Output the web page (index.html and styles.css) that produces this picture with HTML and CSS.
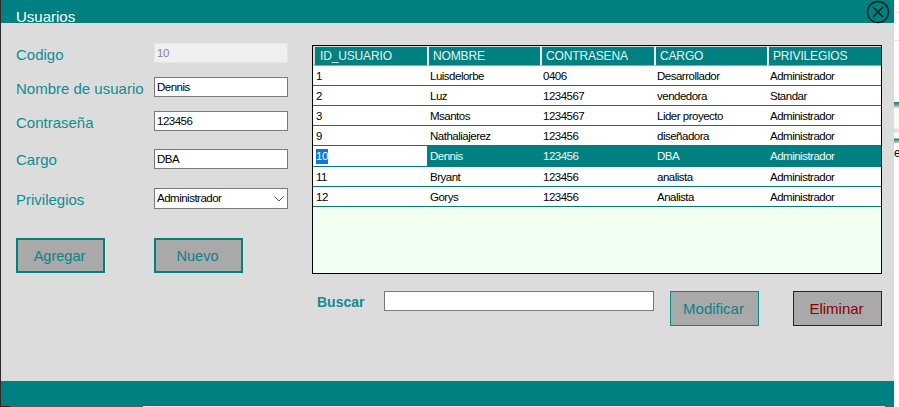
FILE: index.html
```html
<!DOCTYPE html>
<html lang="es">
<head>
<meta charset="utf-8">
<title>Usuarios</title>
<link rel="stylesheet" href="styles.css">
</head>
<body>
<div class="window">
  <header class="titlebar">Usuarios</header>
  <main class="content">
    <section class="form">
      <div class="field field-codigo"><label>Codigo</label><input class="ctl ctl-disabled" value="10" disabled></div>
      <div class="field field-nombre"><label>Nombre de usuario</label><input class="ctl" value="Dennis"></div>
      <div class="field field-pass"><label>Contraseña</label><input class="ctl" value="123456"></div>
      <div class="field field-cargo"><label>Cargo</label><input class="ctl" value="DBA"></div>
      <div class="field field-priv"><label>Privilegios</label>
        <div class="ctl combo">Administrador
          <svg class="chev" width="10" height="6" viewBox="0 0 10 6"><path d="M.5.5 5 5 9.500.5" fill="none" stroke="#555" stroke-width="1"/></svg>
        </div>
      </div>
      <div class="actions">
        <button class="btn btn-thick">Agregar</button>
        <button class="btn btn-thick">Nuevo</button>
      </div>
    </section>
    <section class="side">
      <div class="grid">
        <table>
          <colgroup><col class="c1"><col class="c2"><col class="c3"><col class="c4"><col class="c5"></colgroup>
          <thead><tr><th>ID_USUARIO</th><th>NOMBRE</th><th>CONTRASENA</th><th>CARGO</th><th>PRIVILEGIOS</th></tr></thead>
          <tbody>
            <tr><td>1</td><td>Luisdelorbe</td><td>0406</td><td>Desarrollador</td><td>Administrador</td></tr>
            <tr><td>2</td><td>Luz</td><td>1234567</td><td>vendedora</td><td>Standar</td></tr>
            <tr><td>3</td><td>Msantos</td><td>1234567</td><td>Lider proyecto</td><td>Administrador</td></tr>
            <tr><td>9</td><td>Nathaliajerez</td><td>123456</td><td>diseñadora</td><td>Administrador</td></tr>
            <tr class="selected"><td><span class="mark">10</span></td><td>Dennis</td><td>123456</td><td>DBA</td><td>Administrador</td></tr>
            <tr><td>11</td><td>Bryant</td><td>123456</td><td>analista</td><td>Administrador</td></tr>
            <tr><td>12</td><td>Gorys</td><td>123456</td><td>Analista</td><td>Administrador</td></tr>
          </tbody>
        </table>
      </div>
      <div class="search">
        <label class="search-label">Buscar</label>
        <input class="ctl search-input">
        <button class="btn btn-mod">Modificar</button>
        <button class="btn btn-del">Eliminar</button>
      </div>
    </section>
  </main>
  <footer class="statusbar"></footer>
</div>
<svg class="close" width="24" height="24" viewBox="0 0 24 24"><circle cx="12" cy="12" r="10.500" fill="none" stroke="#0c1f1f" stroke-width="1.500"/><path d="M7 7l10 10M17 7 7 17" stroke="#0c1f1f" stroke-width="1.500"/></svg>
<div class="behind">
  <div class="behind-line behind-line-a"></div>
  <div class="behind-line behind-line-b"></div>
  <div class="behind-band"></div>
  <div class="behind-text">ec</div>
</div>
<div class="edge edge-dark"></div>
<div class="edge edge-light"></div>
</body>
</html>
```
FILE: styles.css
```css
* { box-sizing: border-box; }
html, body { margin: 0; padding: 0; height: 407px; overflow: hidden; background: #fff; }
body { font-family: "Liberation Sans", Arial, sans-serif; position: relative; }

.window { width: 894px; height: 407px; display: flex; flex-direction: column; background: #dcdcdc; border-left: 1px solid #2a2a2a; }
.titlebar { height: 23px; background: #008080; color: #fff; font-size: 15px; line-height: 13px; padding: 10px 0 0 15px; flex: none; }
.content { flex: 1; display: flex; min-height: 0; }
.statusbar { height: 26px; background: #008080; flex: none; }

.form { width: 311px; padding-left: 15px; flex: none; }
.field { display: flex; align-items: center; }
.field label { width: 138px; flex: none; font-size: 15px; color: #0e8c92; white-space: nowrap; }
.ctl { width: 134px; height: 20px; border: 1px solid #7a7a7a; background: #fff; font: 11.500px "Liberation Sans", Arial, sans-serif; color: #000; padding: 0 2px; margin: 0; outline: none; letter-spacing: -.5px; }
.ctl-disabled { background: #f0f0f0; border-color: #e4e4e4; color: #8a7f9a; -webkit-text-fill-color: #8a7f9a; opacity: 1; }
.field-codigo { margin-top: 20px; }
.field-nombre { margin-top: 14px; }
.field-pass { margin-top: 14px; }
.field-cargo { margin-top: 18px; }
.field-priv { margin-top: 19px; }
.field-priv .combo { height: 21px; display: flex; align-items: center; justify-content: space-between; padding-right: 3px; padding-bottom: 2px; }
.field-codigo label { position: relative; top: 1px; }
.field-nombre label { position: relative; top: 1px; }
.field-pass label { position: relative; top: 1px; }
.field-priv label { position: relative; top: 1px; }
.chev { flex: none; position: relative; top: 1px; }
.actions { display: flex; gap: 49px; margin-top: 29px; }

.btn { width: 89px; height: 35px; background: #a9a9a9; font: 15px "Liberation Sans", Arial, sans-serif; padding: 0 2px 0 0; margin: 0; }
.btn-thick { border: 2px solid #008080; color: #0e8088; font-size: 14.500px; }
.btn-mod { border: 1px solid #008b8b; color: #0e8088; margin-left: 16px; }
.btn-del { border: 1px solid #800000; color: #8b0000; margin-left: 34px; }

.side { width: 570px; flex: none; padding-top: 22px; }
.grid { width: 570px; height: 229px; background: #f0fff0; border: 1px solid #000; }
table { border-collapse: separate; border-spacing: 0; table-layout: fixed; width: 568px; font-size: 11.500px; }
.c1 { width: 114px; } .c2 { width: 113px; } .c3 { width: 114px; } .c4 { width: 113px; } .c5 { width: 114px; }
th { height: 20px; background: #008080; color: #e8f4f4; font-size: 12px; font-weight: 400; text-align: left; padding: 0 0 0 4px; border-top: 1px solid #d8d8d8; border-left: 2px solid #e8e8e8; border-bottom: 1px solid #a0a0a0; white-space: nowrap; letter-spacing: -.15px; }
th:first-child { border-left-color: #d8d8d8; padding-left: 5px; }
td { height: 20px; background: #fff; padding: 0 0 0 3px; border-bottom: 1px solid #067a7a; white-space: nowrap; letter-spacing: -.5px; color: #000; }
.selected td { background: #008080; color: #f2f8f8; border-bottom-color: #008080; height: 21px; }
.selected td:first-child { background: #fff; color: #000; border-bottom-color: #008080; }
.mark { background: #0a78d7; color: #fff; display: inline-block; line-height: 15px; }

.search { display: flex; align-items: flex-start; margin-top: 17px; }
.search-label { width: 72px; padding-left: 5px; font-size: 14px; font-weight: 700; color: #0e8c92; margin-top: 3px; flex: none; }
.search-input { width: 270px; flex: none; }

.close { position: absolute; left: 866px; top: 0; }
.behind { position: absolute; left: 894px; top: 0; width: 5px; height: 407px; overflow: hidden; }
.behind-line { position: absolute; left: 0; width: 5px; height: 1px; background: #e6e6e6; }
.behind-line-a { top: 12px; }
.behind-line-b { top: 40px; }
.behind-band { position: absolute; top: 102px; left: 0; width: 5px; height: 41px; background: linear-gradient(#008080 0, #9ccac0 5px, #f0fff0 6px, #f0fff0 26px, #d8d8d8 28px, #fff 33px, #fff 36px, #008080 37px, #9ccac0 40px); }
.behind-text { position: absolute; top: 146px; left: 0; font-size: 12px; line-height: 14px; color: #000; white-space: nowrap; }
.edge { position: absolute; top: 406px; height: 1px; }
.edge-dark { left: 0; width: 10px; background: #2a2a2a; }
.edge-light { left: 143px; width: 742px; background: #e4e4e4; }
```
